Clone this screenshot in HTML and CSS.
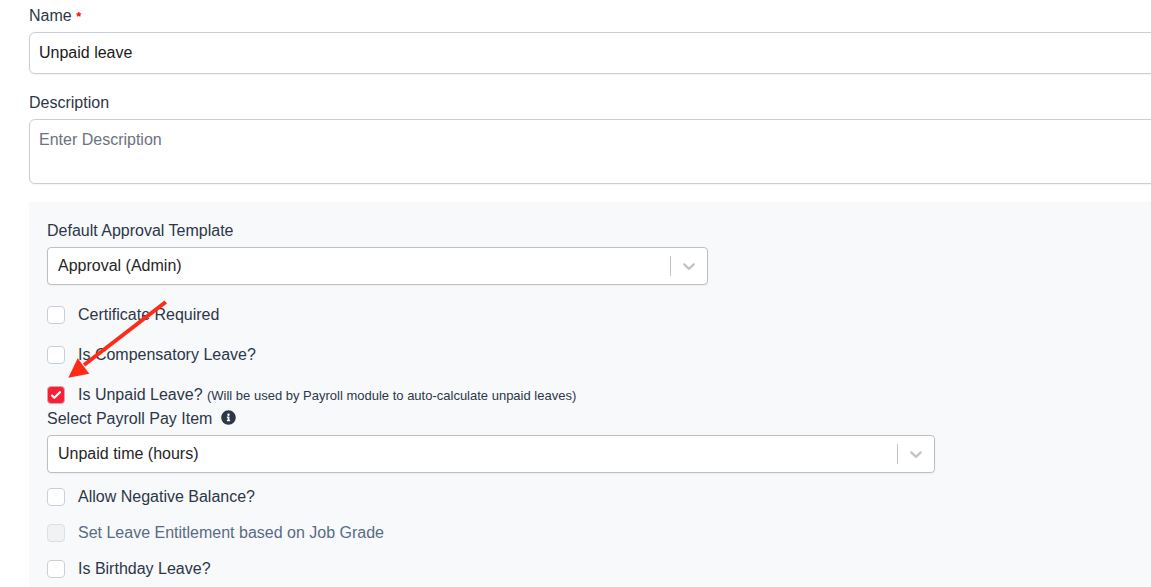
FILE: index.html
```
<!DOCTYPE html>
<html lang="en">
<head>
    <meta charset="UTF-8">
    <meta name="viewport" content="width=device-width, initial-scale=1.0">
    <title>Leave Type</title>
    <link rel="stylesheet" href="styles.css">
</head>
<body>
    <form class="leave-form">
        <div class="field">
            <label for="name">Name <span class="required">*</span></label>
            <input class="control" type="text" id="name" value="Unpaid leave">
        </div>
        <div class="field">
            <label for="description">Description</label>
            <textarea class="control" id="description" placeholder="Enter Description"></textarea>
        </div>

        <div class="panel">
            <div class="field">
                <label for="template">Default Approval Template</label>
                <div class="select">
                    <select id="template">
                        <option>Approval (Admin)</option>
                    </select>
                    <span class="indicator">
                        <svg width="20" height="20" viewBox="0 0 20 20"><path d="M4.516 7.548c0.436-0.446 1.043-0.481 1.576 0l3.908 3.747 3.908-3.747c0.533-0.481 1.141-0.446 1.574 0 0.436 0.445 0.408 1.197 0 1.615-0.406 0.418-4.695 4.502-4.695 4.502-0.217 0.223-0.502 0.335-0.787 0.335s-0.57-0.112-0.789-0.335c0 0-4.287-4.084-4.695-4.502s-0.436-1.17 0-1.615z"/></svg>
                    </span>
                </div>
            </div>

            <div class="checks">
                <label class="check"><input type="checkbox"> Certificate Required</label>
                <label class="check"><input type="checkbox"> Is Compensatory Leave?</label>
                <label class="check"><input type="checkbox" checked><span>Is Unpaid Leave? <small>(Will be used by Payroll module to auto-calculate unpaid leaves)</small></span></label>
            </div>

            <div class="field">
                <label for="payitem">Select Payroll Pay Item
                    <svg class="info" width="15" height="15" viewBox="0 0 512 512"><path d="M256 8C119 8 8 119 8 256s111 248 248 248 248-111 248-248S393 8 256 8zm0 110c23 0 42 19 42 42s-19 42-42 42-42-19-42-42 19-42 42-42zm56 254c0 7-5 12-12 12h-88c-7 0-12-5-12-12v-24c0-7 5-12 12-12h12v-64h-12c-7 0-12-5-12-12v-24c0-7 5-12 12-12h64c7 0 12 5 12 12v100h12c7 0 12 5 12 12z"/></svg>
                </label>
                <div class="select wide">
                    <select id="payitem">
                        <option>Unpaid time (hours)</option>
                    </select>
                    <span class="indicator">
                        <svg width="20" height="20" viewBox="0 0 20 20"><path d="M4.516 7.548c0.436-0.446 1.043-0.481 1.576 0l3.908 3.747 3.908-3.747c0.533-0.481 1.141-0.446 1.574 0 0.436 0.445 0.408 1.197 0 1.615-0.406 0.418-4.695 4.502-4.695 4.502-0.217 0.223-0.502 0.335-0.787 0.335s-0.57-0.112-0.789-0.335c0 0-4.287-4.084-4.695-4.502s-0.436-1.17 0-1.615z"/></svg>
                    </span>
                </div>
            </div>

            <div class="checks compact">
                <label class="check"><input type="checkbox"> Allow Negative Balance?</label>
                <label class="check disabled"><input type="checkbox" disabled> Set Leave Entitlement based on Job Grade</label>
                <label class="check"><input type="checkbox"> Is Birthday Leave?</label>
            </div>

            <svg class="arrow" width="100" height="80" viewBox="0 0 100 80">
                <path d="M97.7 4L16 67" stroke="#ff2a17" stroke-width="4"/>
                <path d="M0.3 79.7L9.7 60.3L21.3 75.7z" fill="#ff2a17"/>
            </svg>
        </div>
    </form>
</body>
</html>
```

FILE: styles.css
```
* {
    box-sizing: border-box;
}

body {
    margin: 0;
    overflow-x: hidden;
    background: #fff;
    color: #2d3748;
    font: 16px/24px "Liberation Sans", Arial, sans-serif;
}

/* the form runs past the right edge of the window */
.leave-form {
    display: flex;
    flex-direction: column;
    min-height: 100vh;
    margin-right: -16px;
    padding: 4px 0 0 29px;
}

.field > label {
    display: block;
    margin-bottom: 4px;
}

.required {
    color: #f00;
    font-size: 13px;
    font-weight: bold;
    line-height: 16px;
}

.control {
    display: block;
    width: 100%;
    height: 42px;
    margin-bottom: 17px;
    padding: 8px 9px;
    border: 1px solid #cbced6;
    border-radius: 6px;
    background: #fff;
    box-shadow: 0 1px 2px rgba(0, 0, 0, .05);
    color: #1a1a1a;
    font: inherit;
}

textarea.control {
    height: 65px;
    margin-bottom: 18px;
    resize: none;
}

.control::placeholder {
    color: #6b7280;
    opacity: 1;
}

.panel {
    position: relative;
    flex: 1;
    padding: 17px 18px 6px;
    background: #f7f9fb;
}

.select {
    position: relative;
    max-width: 661px;
}

.select.wide {
    max-width: 888px;
}

.select select {
    display: block;
    width: 100%;
    height: 38px;
    padding: 0 48px 0 10px;
    border: 1px solid #bfbfbf;
    border-radius: 4px;
    appearance: none;
    background: #fff;
    box-shadow: 0 1px 2px rgba(0, 0, 0, .05);
    color: #262626;
    font: inherit;
}

.indicator {
    position: absolute;
    top: 9px;
    right: 1px;
    display: flex;
    padding: 0 8px;
    border-left: 1px solid #c4c4c4;
    fill: #c4c4c4;
    pointer-events: none;
}

.checks {
    display: flex;
    flex-direction: column;
    align-items: flex-start;
    gap: 16px;
    margin-top: 18px;
}

.checks.compact {
    gap: 12px;
    margin-top: 12px;
}

.check {
    display: flex;
    align-items: center;
    gap: 13px;
}

.check input {
    width: 18px;
    height: 18px;
    margin: 0;
    border: 1px solid #cbd0d8;
    border-radius: 4px;
    appearance: none;
    background: #fff;
}

.check input:checked {
    border-color: #d8a4ae;
    background: #fb1f35 url("data:image/svg+xml,%3Csvg viewBox='0 0 16 16' fill='white' xmlns='http://www.w3.org/2000/svg'%3E%3Cpath d='M12.207 4.793a1 1 0 010 1.414l-5 5a1 1 0 01-1.414 0l-2-2a1 1 0 011.414-1.414L6.5 9.086l4.293-4.293a1 1 0 011.414 0z'/%3E%3C/svg%3E") center / 18px no-repeat;
}

.check input:disabled {
    border-color: #dddfe2;
    background: #f1f2f4;
}

.check small {
    font-size: 13px;
    line-height: 16px;
}

.check.disabled {
    color: #5a6b85;
}

.info {
    margin-left: 4px;
    vertical-align: -1px;
    fill: #2d3748;
}

/* callout drawn over the unpaid leave row */
.arrow {
    position: absolute;
    top: 96px;
    left: 39px;
    pointer-events: none;
}
```
